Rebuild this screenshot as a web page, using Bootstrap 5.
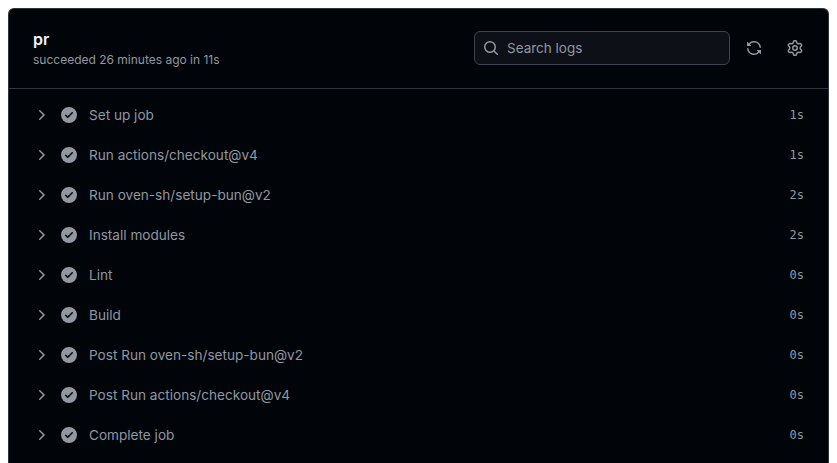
<!doctype html>
<html lang="en">
<head>
<meta charset="utf-8">
<title>pr</title>
<link href="https://cdn.jsdelivr.net/npm/bootstrap@5.3.0/dist/css/bootstrap.min.css" rel="stylesheet">
<style>
html,body{height:100%;overflow:hidden;background:#fff;}
body{font-family:Inter,"Liberation Sans",sans-serif;padding:8px 8px 0 8px;}
.job-panel{background:#010409;border:1px solid #30363d;border-bottom:0;border-radius:6px 6px 0 0;height:455px;width:821px;overflow:hidden;color:#9198a1;}
.job-head{height:80px;border-bottom:1px solid #30363d;padding:0 17px 0 24px;}
.job-title{color:#f0f6fc;font-size:16px;font-weight:600;line-height:20px;margin:0 0 2px;}
.job-sub{font-size:12px;line-height:18px;color:#9198a1;margin-bottom:-1px;}
.head-tools{margin-bottom:2px;}
.log-search{width:256px;height:34px;background:#0d1117;border:1px solid #3d444d;border-radius:6px;padding:0 8px;margin-right:8px;}
.log-search span{font-size:13.5px;color:#9198a1;margin-left:8px;margin-top:1px;}
.tool-btn{width:32px;height:32px;}
.tool-gap{margin-left:9px;}
svg{fill:currentColor;display:block;flex:none;}
.step-list{padding-top:6px;}
.step-row{height:40px;padding:0 24px;font-size:13.6px;color:#9198a1;}
.step-chev{margin-right:12px;}
.step-ok{color:#9198a1;margin-right:12px;width:16px;height:16px;}
.step-time{font-family:"DejaVu Sans Mono","Liberation Mono",monospace;font-size:12px;margin-left:auto;}
</style>
</head>
<body>
<svg width="0" height="0" class="position-absolute">
<defs>
<symbol id="i-chev" viewBox="0 0 16 16"><path d="M6.22 3.22a.75.75 0 0 1 1.06 0l4.25 4.25a.75.75 0 0 1 0 1.06l-4.25 4.25a.751.751 0 0 1-1.042-.018.751.751 0 0 1-.018-1.042L9.94 8 6.22 4.28a.75.75 0 0 1 0-1.06Z"/></symbol>
<symbol id="i-ok" viewBox="0 0 16 16"><path d="M8 16A8 8 0 1 1 8 0a8 8 0 0 1 0 16Zm3.78-9.72a.751.751 0 0 0-.018-1.042.751.751 0 0 0-1.042-.018L6.75 9.19 5.28 7.72a.751.751 0 0 0-1.042.018.751.751 0 0 0-.018 1.042l2 2a.75.75 0 0 0 1.06 0Z"/></symbol>
</defs>
</svg>
<main class="job-panel d-flex flex-column">
  <header class="job-head d-flex align-items-center justify-content-between">
    <div>
      <h1 class="job-title">pr</h1>
      <div class="job-sub">succeeded 26 minutes ago in 11s</div>
    </div>
    <div class="head-tools d-flex align-items-center">
      <div class="log-search d-flex align-items-center">
        <svg width="16" height="16" viewBox="0 0 16 16"><path d="M10.68 11.74a6 6 0 0 1-7.922-8.982 6 6 0 0 1 8.982 7.922l3.04 3.04a.749.749 0 0 1-.326 1.275.749.749 0 0 1-.734-.215ZM11.5 7a4.499 4.499 0 1 0-8.997 0A4.499 4.499 0 0 0 11.5 7Z"/></svg>
        <span>Search logs</span>
      </div>
      <div class="tool-btn d-flex align-items-center justify-content-center">
        <svg width="16" height="16" viewBox="0 0 16 16"><path d="M1.705 8.005a.75.75 0 0 1 .834.656 5.5 5.5 0 0 0 9.592 2.97l-1.204-1.204a.25.25 0 0 1 .177-.427h3.646a.25.25 0 0 1 .25.25v3.646a.25.25 0 0 1-.427.177l-1.38-1.38A7.002 7.002 0 0 1 1.05 8.84a.75.75 0 0 1 .656-.834ZM8 2.5a5.487 5.487 0 0 0-4.131 1.869l1.204 1.204A.25.25 0 0 1 4.896 6H1.25A.25.25 0 0 1 1 5.75V2.104a.25.25 0 0 1 .427-.177l1.38 1.38A7.002 7.002 0 0 1 14.95 7.16a.75.75 0 0 1-1.49.178A5.5 5.5 0 0 0 8 2.5Z"/></svg>
      </div>
      <div class="tool-btn tool-gap d-flex align-items-center justify-content-center">
        <svg width="16" height="16" viewBox="0 0 16 16"><path d="M8 0a8.2 8.2 0 0 1 .701.031C9.444.095 9.99.645 10.16 1.29l.288 1.107c.018.066.079.158.212.224.231.114.454.243.668.386.123.082.233.09.299.071l1.103-.303c.644-.176 1.392.021 1.82.63.27.385.506.792.704 1.218.315.675.111 1.422-.364 1.891l-.814.806c-.049.048-.098.147-.088.294.016.257.016.515 0 .772-.01.147.038.246.088.294l.814.806c.475.469.679 1.216.364 1.891a7.977 7.977 0 0 1-.704 1.217c-.428.61-1.176.807-1.82.63l-1.102-.302c-.067-.019-.177-.011-.3.071a5.909 5.909 0 0 1-.668.386c-.133.066-.194.158-.211.224l-.29 1.106c-.168.646-.715 1.196-1.458 1.26a8.006 8.006 0 0 1-1.402 0c-.743-.064-1.289-.614-1.458-1.26l-.289-1.106c-.018-.066-.079-.158-.212-.224a5.738 5.738 0 0 1-.668-.386c-.123-.082-.233-.09-.299-.071l-1.103.303c-.644.176-1.392-.021-1.82-.63a8.12 8.12 0 0 1-.704-1.218c-.315-.675-.111-1.422.363-1.891l.815-.806c.05-.048.098-.147.088-.294a6.214 6.214 0 0 1 0-.772c.01-.147-.038-.246-.088-.294l-.815-.806C.635 6.045.431 5.298.746 4.623a7.92 7.92 0 0 1 .704-1.217c.428-.61 1.176-.807 1.82-.63l1.102.302c.067.019.177.011.3-.071.214-.143.437-.272.668-.386.133-.066.194-.158.211-.224l.29-1.106C6.009.645 6.556.095 7.299.03 7.53.01 7.764 0 8 0Zm-.571 1.525c-.036.003-.108.036-.137.146l-.289 1.105c-.147.561-.549.967-.998 1.189-.173.086-.34.183-.5.29-.417.278-.97.423-1.529.27l-1.103-.303c-.109-.03-.175.016-.195.045-.22.312-.412.644-.573.99-.014.031-.021.11.059.19l.815.806c.411.406.562.957.53 1.456a4.709 4.709 0 0 0 0 .582c.032.499-.119 1.05-.53 1.456l-.815.806c-.081.08-.073.159-.059.19.162.346.353.677.573.989.02.03.085.076.195.046l1.102-.303c.56-.153 1.113-.008 1.53.27.161.107.328.204.501.29.447.222.85.629.997 1.189l.289 1.105c.029.109.101.143.137.146a6.6 6.6 0 0 0 1.142 0c.036-.003.108-.036.137-.146l.289-1.105c.147-.561.549-.967.998-1.189.173-.086.34-.183.5-.29.417-.278.97-.423 1.529-.27l1.103.303c.109.029.175-.016.195-.045.22-.313.411-.644.573-.99.014-.031.021-.11-.059-.19l-.815-.806c-.411-.406-.562-.957-.53-1.456a4.709 4.709 0 0 0 0-.582c-.032-.499.119-1.05.53-1.456l.815-.806c.081-.08.073-.159.059-.19a6.464 6.464 0 0 0-.573-.989c-.02-.03-.085-.076-.195-.046l-1.102.303c-.56.153-1.113.008-1.53-.27a4.44 4.44 0 0 0-.501-.29c-.447-.222-.85-.629-.997-1.189l-.289-1.105c-.029-.11-.101-.143-.137-.146a6.6 6.6 0 0 0-1.142 0ZM11 8a3 3 0 1 1-6 0 3 3 0 0 1 6 0ZM9.5 8a1.5 1.5 0 1 0-3.001.001A1.5 1.5 0 0 0 9.5 8Z"/></svg>
      </div>
    </div>
  </header>
  <div class="step-list">
    <div class="step-row d-flex align-items-center"><svg class="step-chev" width="16" height="16"><use href="#i-chev"/></svg><svg class="step-ok"><use href="#i-ok"/></svg><span>Set up job</span><span class="step-time">1s</span></div>
    <div class="step-row d-flex align-items-center"><svg class="step-chev" width="16" height="16"><use href="#i-chev"/></svg><svg class="step-ok"><use href="#i-ok"/></svg><span>Run actions/checkout@v4</span><span class="step-time">1s</span></div>
    <div class="step-row d-flex align-items-center"><svg class="step-chev" width="16" height="16"><use href="#i-chev"/></svg><svg class="step-ok"><use href="#i-ok"/></svg><span>Run oven-sh/setup-bun@v2</span><span class="step-time">2s</span></div>
    <div class="step-row d-flex align-items-center"><svg class="step-chev" width="16" height="16"><use href="#i-chev"/></svg><svg class="step-ok"><use href="#i-ok"/></svg><span>Install modules</span><span class="step-time">2s</span></div>
    <div class="step-row d-flex align-items-center"><svg class="step-chev" width="16" height="16"><use href="#i-chev"/></svg><svg class="step-ok"><use href="#i-ok"/></svg><span>Lint</span><span class="step-time">0s</span></div>
    <div class="step-row d-flex align-items-center"><svg class="step-chev" width="16" height="16"><use href="#i-chev"/></svg><svg class="step-ok"><use href="#i-ok"/></svg><span>Build</span><span class="step-time">0s</span></div>
    <div class="step-row d-flex align-items-center"><svg class="step-chev" width="16" height="16"><use href="#i-chev"/></svg><svg class="step-ok"><use href="#i-ok"/></svg><span>Post Run oven-sh/setup-bun@v2</span><span class="step-time">0s</span></div>
    <div class="step-row d-flex align-items-center"><svg class="step-chev" width="16" height="16"><use href="#i-chev"/></svg><svg class="step-ok"><use href="#i-ok"/></svg><span>Post Run actions/checkout@v4</span><span class="step-time">0s</span></div>
    <div class="step-row d-flex align-items-center"><svg class="step-chev" width="16" height="16"><use href="#i-chev"/></svg><svg class="step-ok"><use href="#i-ok"/></svg><span>Complete job</span><span class="step-time">0s</span></div>
  </div>
</main>
</body>
</html>
